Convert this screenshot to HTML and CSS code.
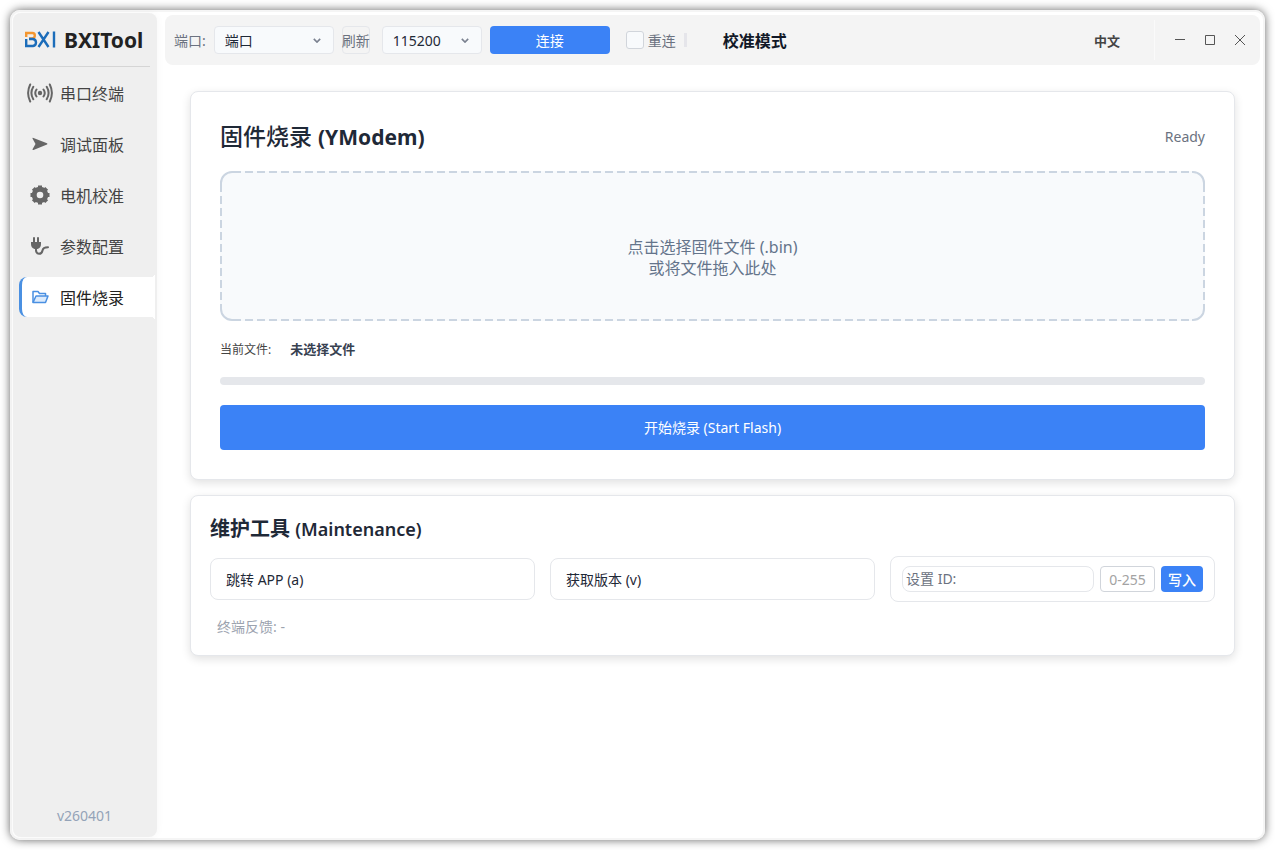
FILE: index.html
```html
<!DOCTYPE html>
<html lang="zh-CN">
<head>
	<meta charset="UTF-8">
	<title>BXITool</title>
	<link rel="stylesheet" href="styles.css">
</head>
<body>
	<div class="window">
		<aside class="sidebar">
			<div class="brand">
				<svg class="logo" viewBox="0 0 32 17" width="32" height="17" fill="none" stroke-width="2.400" aria-hidden="true">
					<path d="M2.200 6V2H8.500Q10.800 2 10.800 4.500Q10.800 7 8.500 7.500H5" stroke="#f3962f"/>
					<path d="M2.200 8V15H9Q12 14.500 12 11.500Q12 8.500 9 8H5" stroke="#1c6dba"/>
					<path d="M14.500 1L24.500 16M24.500 1L14.500 16M30 0.500V16.500" stroke="#1c6dba" stroke-width="2.400"/>
				</svg>
				<h1>BXITool</h1>
			</div>
			<nav class="menu">
				<a href="#terminal">
					<svg viewBox="0 0 26 20" width="26" height="20" fill="none" stroke="#666" stroke-width="2" stroke-linecap="round">
						<circle cx="13" cy="10" r="2.200" fill="#666" stroke="none"/>
						<path d="M9.500 6.500Q7 10 9.500 13.500M6.300 3.800Q2.500 10 6.300 16.200M3.200 1.500Q-1 10 3.200 18.500M16.500 6.500Q19 10 16.500 13.500M19.700 3.800Q23.500 10 19.700 16.200M22.800 1.500Q27 10 22.800 18.500"/>
					</svg>
					<span>串口终端</span>
				</a>
				<a href="#debug">
					<svg viewBox="0 0 26 20" width="26" height="20" fill="#666">
						<path d="M5.500 4.500Q5.300 3.500 6.500 4L20 9.200Q21 10 20 10.600L6.500 16Q5.300 16.300 5.500 15.300L8.500 10Z"/>
					</svg>
					<span>调试面板</span>
				</a>
				<a href="#motor">
					<svg viewBox="0 0 26 20" width="26" height="20" fill="none" stroke="#666">
						<circle cx="13" cy="10" r="5.800" stroke-width="5"/>
						<path d="M13 0.500V3M13 17V19.500M3.500 10H6M20 10H22.500M6.300 3.300L8 5M18 15L19.700 16.700M19.700 3.300L18 5M8 15L6.300 16.700" stroke-width="4" stroke-linejoin="round"/>
					</svg>
					<span>电机校准</span>
				</a>
				<a href="#params">
					<svg viewBox="0 0 26 20" width="26" height="20" fill="none" stroke="#666" stroke-width="2" stroke-linecap="round">
						<path d="M7 2V6M11 2V6"/>
						<path d="M4 6H14V8Q14 12 10.500 13H7.500Q4 12 4 8Z" fill="#666" stroke="none"/>
						<path d="M9 12Q8.500 17.500 12 17.800Q15 17.800 15.500 14.500Q16 11.200 21 11.200"/>
					</svg>
					<span>参数配置</span>
				</a>
				<a href="#flash" class="active">
					<svg viewBox="0 0 26 20" width="26" height="20" fill="none" stroke="#4a90e2" stroke-width="1.500" stroke-linejoin="round">
						<path d="M6 15.500V4.500H11L12.500 6.500H18.500V9"/>
						<path d="M6 15.500L9 9H21L18.500 15.500Z" fill="#dcebfc"/>
					</svg>
					<span>固件烧录</span>
				</a>
			</nav>
			<p class="version">v260401</p>
		</aside>

		<div class="main">
			<header class="topbar">
				<label for="port">端口:</label>
				<div class="select port">
					<select id="port"><option>端口</option></select>
					<svg viewBox="0 0 10 6" width="8" height="5" fill="none" stroke="#7b8190" stroke-width="2"><path d="M1 1L5 5L9 1"/></svg>
				</div>
				<button type="button" class="refresh">刷新</button>
				<div class="select baud">
					<select aria-label="波特率"><option>115200</option></select>
					<svg viewBox="0 0 10 6" width="8" height="5" fill="none" stroke="#7b8190" stroke-width="2"><path d="M1 1L5 5L9 1"/></svg>
				</div>
				<button type="button" class="connect">连接</button>
				<label class="reconnect"><input type="checkbox">重连</label>
				<span class="split"></span>
				<strong class="mode">校准模式</strong>
				<button type="button" class="lang">中文</button>
				<div class="controls">
					<button type="button" aria-label="最小化"><svg viewBox="0 0 12 12" width="12" height="12"><path d="M1 5.500H11"/></svg></button>
					<button type="button" aria-label="最大化"><svg viewBox="0 0 12 12" width="12" height="12"><path d="M1.500 1.500H10.500V10.500H1.500Z"/></svg></button>
					<button type="button" aria-label="关闭"><svg viewBox="0 0 12 12" width="12" height="12"><path d="M1 1L11 11M11 1L1 11"/></svg></button>
				</div>
			</header>

			<main class="content">
				<section class="card flash">
					<div class="card-head">
						<h2>固件烧录 <small>(YModem)</small></h2>
						<span class="status">Ready</span>
					</div>
					<button type="button" class="drop">点击选择固件文件 (.bin)<br>或将文件拖入此处</button>
					<p class="file">当前文件: <strong>未选择文件</strong></p>
					<div class="progress" role="progressbar" aria-label="烧录进度" aria-valuenow="0" aria-valuemin="0" aria-valuemax="100"></div>
					<button type="button" class="start">开始烧录 (Start Flash)</button>
				</section>

				<section class="card tools">
					<h3>维护工具 <small>(Maintenance)</small></h3>
					<div class="tool-row">
						<button type="button" class="tool">跳转 APP (a)</button>
						<button type="button" class="tool">获取版本 (v)</button>
						<div class="set-id">
							<label for="device-id">设置 ID:</label>
							<input type="text" id="device-id" placeholder="0-255">
							<button type="button">写入</button>
						</div>
					</div>
					<p class="feedback">终端反馈: -</p>
				</section>
			</main>
		</div>
	</div>
</body>
</html>
```
FILE: styles.css
```css
* { margin:0;padding:0;box-sizing:border-box; }
body { height:100vh;padding:10px;background:#fff;font-family:"Noto Sans","Noto Sans CJK SC",sans-serif;font-size:14px;color:#1f2937; }
button, input, select { font:inherit;color:inherit; }
button { border:0;background:none;cursor:pointer;white-space:nowrap; }
a { color:inherit;text-decoration:none; }

.window { display:flex;min-height:100%;padding:3px;background:#fff;border-radius:10px;box-shadow:0 0 10px rgba(0,0,0,.6), inset 0 0 0 2px #f5f5f5; }

/* 侧边栏 */
.sidebar { display:flex;flex-direction:column;flex:none;width:144px;padding:0 2px 11px 6px;background:#efefef;border-radius:8px;box-shadow:0 0 8px rgba(0,0,0,.04); }
.brand { display:flex;align-items:center;gap:8px;height:54px;margin-right:5px;padding-left:5px;border-bottom:1px solid #d5d5d5; }
.brand h1 { font-size:21px;line-height:28px;color:#222; }
.menu { display:flex;flex-direction:column;gap:11px;padding-top:6px; }
.menu a { display:flex;align-items:center;gap:7px;height:40px;padding-left:5px;border-left:3px solid transparent;font-size:16px;color:#444; }
.menu svg { flex:none; }
.menu .active { position:relative;background:#fff;border-color:#4a90e2;border-radius:8px 0 0 8px;color:#222; }
.menu .active::before, .menu .active::after { content:"";position:absolute;right:0;width:4px;height:4px; }
.menu .active::before { top:-4px;background:radial-gradient(circle at 0 0, transparent 4px, #fff 4px); }
.menu .active::after { bottom:-4px;background:radial-gradient(circle at 0 100%, transparent 4px, #fff 4px); }
.version { margin:auto 5px 0 0;text-align:center;line-height:20px;color:#94a3b8; }

/* 顶部栏 */
.main { flex:1;min-width:0;padding:2px 2px 0 8px; }
.topbar { display:flex;align-items:center;gap:8px;height:50px;padding-left:9px;background:#f4f4f4;border-radius:8px;color:#6b7280; }
.select { display:grid;align-items:center;height:28px; }
.select select { grid-area:1/1;width:100%;height:28px;padding-left:10px;appearance:none;background:#f8fafc;border:1px solid #e5e7eb;border-radius:4px;color:#1f2937; }
.select svg { grid-area:1/1;justify-self:end;margin-right:13px;pointer-events:none; }
.port { width:120px; }
.baud { width:100px;margin-left:4px; }
.refresh { width:28px;height:28px;border:1px solid #e5e7eb;border-radius:4px;display:flex;align-items:center;justify-content:center; }
.connect { width:120px;height:28px;background:#3b82f6;border-radius:4px;color:#fff; }
.reconnect { display:flex;align-items:center;gap:4px;margin-left:8px; }
.reconnect input { width:18px;height:18px;appearance:none;background:#f8fafc;border:1px solid #d1d5db;border-radius:3px; }
.split { width:3px;height:14px;background:#e5e5ea; }
.mode { margin-left:28px;font-size:16px;color:#111827; }
.lang { margin-left:auto;font-size:13px;font-weight:bold;color:#444; }
.controls { display:flex;align-items:center;height:40px;margin-left:26px;padding:0 5px 0 10px;border-left:1px solid #fafafa; }
.controls button { display:flex;align-items:center;justify-content:center;width:30px;height:30px; }
.controls path { fill:none;stroke:#555; }

/* 内容区 */
.content { display:flex;flex-direction:column;gap:15px;padding:26px 25px 25px; }
.card { background:#fff;border:1px solid #e5e7eb;border-radius:8px;box-shadow:0 3px 10px rgba(0,0,0,.12); }
.flash { padding:29px; }
.card-head { display:flex;align-items:center;justify-content:space-between;height:30px;margin-bottom:20px; }
.card h2 { font-size:23px;line-height:30px;font-weight:500; }
.card h2 small { font-size:21px;font-weight:bold; }
.status { color:#6b7280; }
.drop { position:relative;display:block;width:100%;height:150px;padding-top:24px;background:#f8fafc;border:2px solid #cbd5e1;border-radius:12px;line-height:21px;font-size:16px;color:#64748b; }
/* 在实线边框上盖出间隔，圆角保持连续 */
.drop::before, .drop::after { content:"";position:absolute;background-repeat:no-repeat; }
.drop::before { top:-2px;bottom:-2px;left:11px;right:11px;background-image:repeating-linear-gradient(90deg, transparent 0 8px, #f8fafc 8px 12px), repeating-linear-gradient(90deg, transparent 0 8px, #f8fafc 8px 12px);background-size:100% 2px;background-position:top, bottom; }
.drop::after { left:-2px;right:-2px;top:11px;bottom:11px;background-image:repeating-linear-gradient(transparent 0 8px, #f8fafc 8px 12px), repeating-linear-gradient(transparent 0 8px, #f8fafc 8px 12px);background-size:2px 100%;background-position:left, right; }
.file { margin:18px 0 17px;line-height:20px;font-size:12px;color:#444; }
.file strong { margin-left:16px;font-size:13px;color:#374151; }
.progress { height:8px;margin-bottom:20px;background:#e5e7eb;border-radius:4px; }
.start { display:block;width:100%;height:45px;padding-bottom:1px;background:#3b82f6;border-radius:4px;color:#fff; }

.tools { padding:19px 19px 18px; }
.tools h3 { line-height:28px;font-size:20px;font-weight:600; }
.tools h3 small { font-size:18px; }
.tool-row { display:grid;grid-template-columns:repeat(3, 1fr);align-items:center;gap:15px;margin-top:13px; }
.tool { height:42px;padding-left:15px;border:1px solid #e5e7eb;border-radius:8px;text-align:left; }
.set-id { display:flex;align-items:center;gap:6px;height:46px;padding:0 11px;border:1px solid #e5e7eb;border-radius:8px; }
.set-id label { flex:1;height:26px;padding-left:3px;border:1px solid #e5e7eb;border-radius:8px;line-height:24px;color:#6b7280; }
.set-id input { width:55px;height:26px;border:1px solid #d1d5db;border-radius:4px;background:#fff;text-align:center;color:#374151; }
.set-id input::placeholder { color:#a3a3a3; }
.set-id button { width:42px;height:26px;background:#3b82f6;border-radius:4px;font-weight:500;color:#fff; }
.feedback { margin-top:15px;padding-left:7px;line-height:20px;color:#9ca3af; }
```
